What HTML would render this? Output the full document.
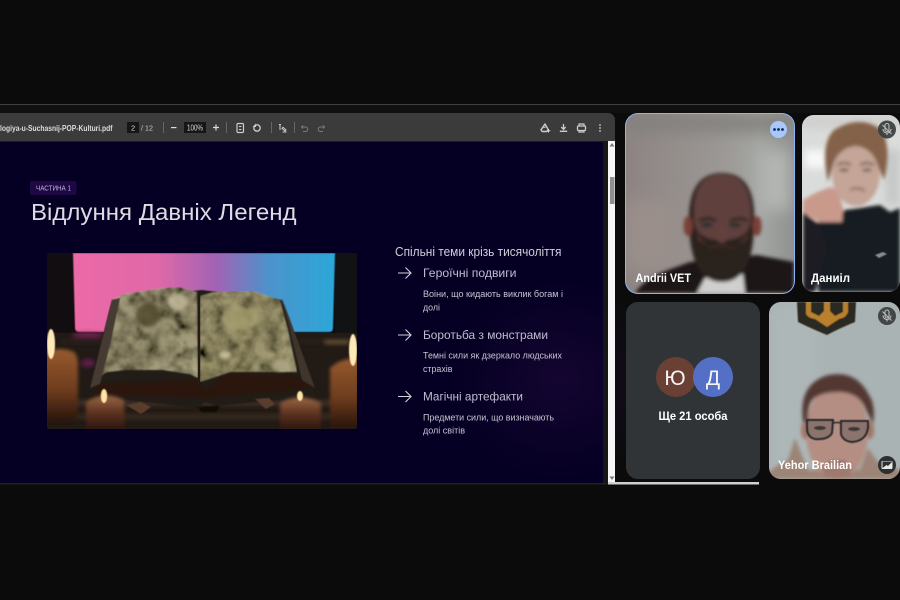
<!DOCTYPE html>
<html><head><meta charset="utf-8"><style>
html,body{margin:0;padding:0;background:#0b0b0b;width:900px;height:600px;overflow:hidden}
svg{display:block}
text{font-family:"Liberation Sans","DejaVu Sans",sans-serif}
</style></head><body>
<svg width="900" height="600" viewBox="0 0 900 600" xmlns="http://www.w3.org/2000/svg">
<defs>
<filter id="b05" x="-10%" y="-10%" width="120%" height="120%"><feGaussianBlur stdDeviation="0.6"/></filter>
<filter id="b1" x="-20%" y="-20%" width="140%" height="140%"><feGaussianBlur stdDeviation="1.800"/></filter>
<filter id="b2" x="-30%" y="-30%" width="160%" height="160%"><feGaussianBlur stdDeviation="2"/></filter>
<filter id="b4" x="-50%" y="-50%" width="200%" height="200%"><feGaussianBlur stdDeviation="4"/></filter>
<filter id="b8" x="-80%" y="-80%" width="260%" height="260%"><feGaussianBlur stdDeviation="8"/></filter>
<filter id="tx" x="-5%" y="-20%" width="110%" height="140%"><feGaussianBlur stdDeviation="0.3"/></filter>
<filter id="tex" x="0" y="0" width="100%" height="100%">
<feTurbulence type="fractalNoise" baseFrequency="0.075" numOctaves="3" seed="7" result="n"/>
<feColorMatrix in="n" type="matrix" values="1.200 1.200 0 0 -0.5  1.200 1.200 0 0 -0.5  1.200 1.200 0 0 -0.55  0 0 0 0 1" result="g"/>
<feBlend in="SourceGraphic" in2="g" mode="multiply" result="m"/>
<feComposite in="m" in2="SourceAlpha" operator="in"/>
<feGaussianBlur stdDeviation="0.7"/>
</filter>
<linearGradient id="scr" x1="0" x2="1" y1="0" y2="0"><stop offset="0" stop-color="#ec6aa6"/><stop offset=".32" stop-color="#e068a8"/><stop offset=".55" stop-color="#a064b4"/><stop offset=".75" stop-color="#4c93cb"/><stop offset="1" stop-color="#2ba7d8"/></linearGradient>
<radialGradient id="glow" cx=".5" cy=".5" r=".5"><stop offset="0" stop-color="#220a3c" stop-opacity=".5"/><stop offset="1" stop-color="#220a3c" stop-opacity="0"/></radialGradient>
<linearGradient id="bg1" x1="0" x2="1" y1="0" y2="0"><stop offset="0" stop-color="#8d8482"/><stop offset=".55" stop-color="#9b9794"/><stop offset=".8" stop-color="#a4a6a3"/><stop offset="1" stop-color="#8f918f"/></linearGradient>
<linearGradient id="pageL" x1="0" x2="1" y1="0" y2="1"><stop offset="0" stop-color="#a89f82"/><stop offset=".5" stop-color="#968e70"/><stop offset="1" stop-color="#b0a888"/></linearGradient>
<linearGradient id="pageR" x1="0" x2="1" y1="0" y2="1"><stop offset="0" stop-color="#aca27e"/><stop offset=".5" stop-color="#968e68"/><stop offset="1" stop-color="#b0a884"/></linearGradient>
<linearGradient id="cand" x1="0" x2="0" y1="0" y2="1"><stop offset="0" stop-color="#96592e"/><stop offset=".55" stop-color="#6e3d1e"/><stop offset="1" stop-color="#26130a"/></linearGradient>
<linearGradient id="cand2" x1="0" x2="0" y1="0" y2="1"><stop offset="0" stop-color="#9a6644"/><stop offset=".5" stop-color="#5c3220"/><stop offset="1" stop-color="#2e170e"/></linearGradient>
<clipPath id="cImg"><rect x="47" y="253" width="310" height="176" rx="2"/></clipPath>
<clipPath id="c1"><rect x="626" y="114" width="168" height="179" rx="12"/></clipPath>
<clipPath id="c2"><rect x="802" y="115" width="98" height="177" rx="12"/></clipPath>
<clipPath id="c4"><rect x="769" y="302" width="131" height="177" rx="12"/></clipPath>
</defs>

<rect width="900" height="600" fill="#0b0b0b"/>
<rect x="0" y="104" width="900" height="1" fill="#3f3f3f"/>
<rect x="0" y="105" width="900" height="8" fill="#101010"/>

<!-- PDF viewer -->
<path d="M0 113H608a7 7 0 0 1 7 7V141H0Z" fill="#3b3b3b"/>
<rect x="0" y="141" width="603" height="1.500" fill="#1c1c1c"/>
<rect x="0" y="142" width="603" height="341" fill="#050023"/>
<ellipse cx="560" cy="380" rx="110" ry="100" fill="url(#glow)"/>
<rect x="603" y="141" width="5" height="342" fill="#161616"/>
<rect x="608" y="141" width="7" height="342" fill="#f6f6f6"/>
<rect x="610" y="177" width="4.500" height="27" fill="#8f8f8f"/>
<path d="M612 143l2.500 3.500h-5z" fill="#777"/>
<path d="M612 480l2.500-3.500h-5z" fill="#777"/>
<rect x="0" y="483" width="615" height="1.500" fill="#222"/>

<!-- toolbar -->
<g filter="url(#tx)">
<text x="0" y="131" font-size="8" font-weight="700" fill="#dcdcdc" textLength="112.500" lengthAdjust="spacingAndGlyphs">logiya-u-Suchasnij-POP-Kulturi.pdf</text>
<rect x="127" y="122" width="12" height="11" fill="#151515"/>
<text x="131" y="130.500" font-size="7.500" fill="#ddd">2</text>
<text x="141" y="130.500" font-size="7.500" fill="#c8c8c8" textLength="12" lengthAdjust="spacingAndGlyphs">/ 12</text>
<rect x="163" y="122" width="1" height="11" fill="#666"/>
<rect x="171" y="127" width="5.500" height="1.200" fill="#ddd"/>
<rect x="184" y="122" width="22" height="11" fill="#151515"/>
<text x="187" y="130.500" font-size="8" fill="#ddd" textLength="16" lengthAdjust="spacingAndGlyphs">100%</text>
<path d="M213 127.500h6M216 124.500v6" stroke="#ddd" stroke-width="1.200"/>
<rect x="226" y="122" width="1" height="11" fill="#666"/>
<rect x="237" y="123.500" width="6.500" height="9" rx="1.200" fill="none" stroke="#ccc" stroke-width="1.200"/>
<path d="M239 126.500h2.500M239 129.500h2.500" stroke="#ccc" stroke-width="1"/>
<circle cx="257" cy="128" r="3.200" fill="none" stroke="#ccc" stroke-width="1.300"/>
<path d="M252.500 127l3.500-3.500v3.500z" fill="#ccc"/>
<rect x="271" y="122" width="1" height="11" fill="#666"/>
<path d="M279 124.500h2M280 124.500v5.500" stroke="#ccc" stroke-width="1"/>
<path d="M282 128.500l3 2.500 1-1-3-2.800zM282.500 132h4" stroke="#ccc" stroke-width="1" fill="none"/>
<rect x="294" y="122" width="1" height="11" fill="#666"/>
<path d="M303 125.500l-1.500 1.500 1.500 1.500M302 127h3.500a2 2 0 0 1 0 4.500H303" stroke="#7a7a7a" stroke-width="1" fill="none"/>
<path d="M323 125.500l1.500 1.500-1.500 1.500M324 127h-3.500a2 2 0 0 0 0 4.500H323" stroke="#7a7a7a" stroke-width="1" fill="none"/>
<path d="M545 124l3.300 5.800-1.500 1.700h-4.600l-1.200-1.700z" fill="none" stroke="#ccc" stroke-width="1.400" stroke-linejoin="round"/>
<path d="M543.500 128l2.500-1.500" stroke="#ccc" stroke-width="1"/>
<path d="M548.500 129v3.500M546.800 130.800h3.500" stroke="#ddd" stroke-width="1"/>
<path d="M563.500 124v5M561.300 127l2.200 2.400 2.200-2.400" stroke="#ccc" stroke-width="1.300" fill="none"/>
<rect x="559.800" y="130.600" width="7.400" height="1.400" fill="#ccc"/>
<rect x="577.500" y="126" width="8" height="4.500" rx="1" fill="none" stroke="#ccc" stroke-width="1.300"/>
<path d="M579 126v-2h5v2M579 130v2h5v-2" stroke="#ccc" stroke-width="1.200" fill="none"/>
<circle cx="600" cy="125" r=".9" fill="#ccc"/><circle cx="600" cy="128" r=".9" fill="#ccc"/><circle cx="600" cy="131" r=".9" fill="#ccc"/>
</g>

<!-- Slide heading -->
<rect x="30" y="181" width="46.500" height="14" rx="2" fill="#1d0845"/>
<g filter="url(#tx)">
<text x="36" y="190.500" font-size="7" fill="#c0b3d4" textLength="35" lengthAdjust="spacingAndGlyphs">ЧАСТИНА 1</text>
<text x="31" y="220" font-size="23" fill="#dddbe4" textLength="265.500" lengthAdjust="spacingAndGlyphs">Відлуння Давніх Легенд</text>
<text x="395" y="256" font-size="12.500" fill="#d0cedb" textLength="166.500" lengthAdjust="spacingAndGlyphs">Спільні теми крізь тисячоліття</text>

<text x="423" y="277" font-size="12" fill="#c0bcce" textLength="93.500" lengthAdjust="spacingAndGlyphs">Героїчні подвиги</text>
<text x="423" y="297" font-size="9" fill="#c6c3d0" textLength="140" lengthAdjust="spacingAndGlyphs">Воіни, що кидають виклик богам і</text>
<text x="423" y="310.500" font-size="9" fill="#c6c3d0" textLength="17" lengthAdjust="spacingAndGlyphs">долі</text>

<text x="423" y="339" font-size="12" fill="#c0bcce" textLength="125" lengthAdjust="spacingAndGlyphs">Боротьба з монстрами</text>
<text x="423" y="358.500" font-size="9" fill="#c6c3d0" textLength="139" lengthAdjust="spacingAndGlyphs">Темні сили як дзеркало людських</text>
<text x="423" y="372" font-size="9" fill="#c6c3d0" textLength="29.500" lengthAdjust="spacingAndGlyphs">страхів</text>

<text x="423" y="400.500" font-size="12" fill="#c0bcce" textLength="100" lengthAdjust="spacingAndGlyphs">Магічні артефакти</text>
<text x="423" y="420.500" font-size="9" fill="#c6c3d0" textLength="131" lengthAdjust="spacingAndGlyphs">Предмети сили, що визначають</text>
<text x="423" y="433.500" font-size="9" fill="#c6c3d0" textLength="42" lengthAdjust="spacingAndGlyphs">долі світів</text>
</g>
<g fill="none" stroke="#d5d2dc" stroke-width="1.100" filter="url(#tx)">
<path d="M398 273h13M405.500 267.500l5.500 5.500-5.500 5.500"/>
<path d="M398 335h13M405.500 329.500l5.500 5.500-5.500 5.500"/>
<path d="M398 396.500h13M405.500 391l5.500 5.500-5.500 5.500"/>
</g>

<!-- Book image -->
<g clip-path="url(#cImg)">
<rect x="47" y="253" width="310" height="176" fill="#0e0a0c"/>
<rect x="335" y="253" width="22" height="85" fill="#101214"/>
<rect x="47" y="253" width="26" height="85" fill="#120d10"/>
<path d="M73 253H335L333 328Q333 332 329 332H80Q75 332 75 328Z" fill="url(#scr)" filter="url(#b05)"/>
<rect x="47" y="333" width="310" height="96" fill="#211a15"/>
<g filter="url(#b2)">
<rect x="60" y="340" width="290" height="3" fill="#2c241d"/>
<rect x="60" y="400" width="290" height="6" fill="#3a2f27"/>
<rect x="60" y="414" width="290" height="5" fill="#342a22"/>
<ellipse cx="88" cy="335" rx="16" ry="2.500" fill="#7d2258"/>
<ellipse cx="88" cy="363" rx="7" ry="4" fill="#5e1f48"/>
<rect x="325" y="340" width="24" height="4" fill="#6a5735"/>
</g>
<!-- book under -->
<path d="M112 300L90 388l6 8 100 12 10-6 10 4 100-10-2-6-32-90-80-10z" fill="#241a15" filter="url(#b05)"/>
<path d="M94 384L198 380 205 392 228 372 296 376 312 388 206 398 96 395z" fill="#2c150c" filter="url(#b05)"/>
<!-- pages -->
<path d="M97 378L108 345 112 300 124 294 163 288 178 287 197 292 198 378 190 374 163 370 125 370 107 372Z" fill="url(#pageL)" filter="url(#tex)"/>
<path d="M200 296L214 292 253 291 280 300 288 330 297 372 270 372 230 372 200 382Z" fill="url(#pageR)" filter="url(#tex)"/>
<path d="M112 300L90 388 100 384 110 345 120 298Z" fill="#453a30" filter="url(#b05)"/>
<path d="M282 298L315 388 302 380 290 330Z" fill="#40362a" filter="url(#b05)"/>
<g filter="url(#b1)" opacity=".75">
<ellipse cx="148" cy="315" rx="12" ry="12" fill="#4c4528"/>
<ellipse cx="240" cy="318" rx="18" ry="12" fill="#a8a070"/>
<ellipse cx="178" cy="302" rx="10" ry="8" fill="#c8c0a0"/>
<ellipse cx="225" cy="355" rx="6" ry="4" fill="#d8d0a8"/>
<ellipse cx="280" cy="365" rx="9" ry="6" fill="#b0a888"/>
</g>
<!-- leaves -->
<g filter="url(#b05)">
<path d="M126 405l15-3 10 5-10 7z" fill="#5a3e2a"/>
<path d="M255 399l14-1 6 6-9 5z" fill="#5a3e2e"/>
<path d="M198 407l22-1-4 6h-14z" fill="#0c0806"/>
</g>
<!-- candles -->
<g filter="url(#b1)">
<path d="M45 352Q60 346 74 352Q78 356 78 365V418Q62 426 45 420Z" fill="url(#cand)"/>
<path d="M86 402Q104 390 124 400L125 429H86Z" fill="url(#cand2)"/>
<path d="M280 403Q300 392 321 403V429H280Z" fill="url(#cand2)"/>
<path d="M330 368Q340 358 359 358V429H330Z" fill="url(#cand)"/>
</g>
<g filter="url(#b05)">
<ellipse cx="51" cy="344" rx="4" ry="15" fill="#ffe9b8"/>
<ellipse cx="104" cy="396" rx="3.200" ry="7" fill="#ffe4a8"/>
<ellipse cx="300" cy="396" rx="3" ry="5" fill="#ffe4a8"/>
<ellipse cx="353" cy="350" rx="4" ry="16" fill="#ffe9b8"/>
</g>
</g>

<!-- Tile 1 -->
<rect x="625" y="113" width="170" height="181" rx="13" fill="#8ab4f8"/>
<g clip-path="url(#c1)">
<rect x="626" y="114" width="168" height="179" fill="url(#bg1)"/>
<g filter="url(#b8)">
<rect x="760" y="150" width="30" height="60" fill="#b4b6b3"/>
<rect x="626" y="114" width="168" height="18" fill="#82807d"/>
<rect x="626" y="200" width="50" height="70" fill="#9a8f8b"/>
</g>
<g filter="url(#b1)">
<path d="M635 293Q645 278 668 270L690 262 757 255 794 262V293Z" fill="#1c1919"/>
<path d="M697 293L705 278 743 274 745 293Z" fill="#cfcfcf"/>
<path d="M689 225Q687 173 722 173Q757 173 754 225Q753 282 722 282Q691 282 689 225Z" fill="#2a201e"/>
<path d="M694 220Q691 175 722 174Q753 175 751 220Q749 240 722 240Q696 240 694 220Z" fill="#5f403c"/>
<path d="M696 225Q700 250 722 246Q745 250 749 225L747 240Q735 248 722 246Q708 248 698 240Z" fill="#53302c"/>
<ellipse cx="688" cy="226" rx="4.500" ry="10" fill="#7a4138"/>
<ellipse cx="757" cy="226" rx="4.500" ry="10" fill="#7a4138"/>
<path d="M699 221Q708 216 716 221M730 221Q739 216 748 221" stroke="#2b1b1b" stroke-width="2.600" fill="none"/>
<ellipse cx="707" cy="225" rx="6" ry="2.500" fill="#2c3030"/>
<ellipse cx="735" cy="225" rx="6" ry="2.500" fill="#2c3030"/>
<ellipse cx="722" cy="234" rx="6" ry="9" fill="#64403c"/>
<path d="M708 249Q722 243 736 249" stroke="#3a2624" stroke-width="3" fill="none"/>
</g>
</g>
<circle cx="778.500" cy="129.500" r="8.500" fill="#a8c7fa"/>
<circle cx="774.500" cy="129.500" r="1.400" fill="#0c2a5e"/><circle cx="778.500" cy="129.500" r="1.400" fill="#0c2a5e"/><circle cx="782.500" cy="129.500" r="1.400" fill="#0c2a5e"/>
<text x="635.500" y="282" font-size="11.500" font-weight="700" fill="#fff" textLength="55.500" lengthAdjust="spacingAndGlyphs" filter="url(#tx)">Andrii VET</text>

<!-- Tile 2 -->
<g clip-path="url(#c2)">
<rect x="802" y="115" width="98" height="177" fill="#dadcdb"/>
<g filter="url(#b4)">
<rect x="805" y="150" width="22" height="18" fill="#f8f8f8"/>
<rect x="885" y="150" width="15" height="55" fill="#c7c9c9"/>
<rect x="802" y="115" width="98" height="14" fill="#d0d0cf"/>
</g>
<g filter="url(#b1)">
<path d="M818 292V222L845 210 880 205 890 212 900 208V292Z" fill="#191b20"/>
<path d="M803 200L803 213 820 222 830 222 842 222 843 208 838 190 830 187 815 193Z" fill="#c99a8c"/>
<path d="M803 212L820 225 827 250 815 292 803 292Z" fill="#1c1e24"/>
<ellipse cx="856" cy="174" rx="24" ry="32" fill="#c4a598"/>
<path d="M828 182Q820 143 834 130Q860 114 882 130Q892 150 884 180L878 166Q872 147 855 146Q840 148 834 162Z" fill="#846249"/>
<path d="M837 165q8-4 14 0M860 165q7-4 14 0" stroke="#6d5448" stroke-width="2" fill="none"/>
<ellipse cx="844" cy="170" rx="5" ry="1.500" fill="#65524a"/>
<ellipse cx="867" cy="170" rx="5" ry="1.500" fill="#65524a"/>
<path d="M850 190q8-4 15 1" stroke="#8d5a52" stroke-width="2" fill="none"/>
</g>
<path d="M875 255l8-3 4 2-8 4z" fill="#8a8c90" filter="url(#b05)"/>
</g>
<circle cx="887" cy="129.500" r="9" fill="#3a3d3e" fill-opacity=".92"/>
<path d="M885 125.500a2 2 0 0 1 4 0v4a2 2 0 0 1-4 0zM883 129a4 4 0 0 0 8 0M887 133v2M882.500 125l9 9" stroke="#b9bcbd" stroke-width="1.100" fill="none"/>
<text x="811" y="282" font-size="11.500" font-weight="700" fill="#fff" textLength="39" lengthAdjust="spacingAndGlyphs" filter="url(#tx)">Даниіл</text>

<!-- Tile 3 -->
<rect x="626" y="302" width="134" height="177" rx="12" fill="#303436"/>
<circle cx="676" cy="377" r="20" fill="#6a4034"/>
<circle cx="713" cy="377" r="20" fill="#5470c6"/>
<text x="675" y="385" text-anchor="middle" font-size="21" fill="#f4f4f4">Ю</text>
<text x="713" y="385" text-anchor="middle" font-size="21" fill="#f4f4f4">Д</text>
<text x="693" y="420" text-anchor="middle" font-size="11.500" font-weight="700" fill="#fff" textLength="69" lengthAdjust="spacingAndGlyphs" filter="url(#tx)">Ще 21 особа</text>
<rect x="608" y="482" width="151" height="2.500" fill="#d0d0d0"/>

<!-- Tile 4 -->
<g clip-path="url(#c4)">
<rect x="769" y="302" width="131" height="177" fill="#a9b3b4"/>
<rect x="769" y="302" width="50" height="177" fill="#b1b9ba" opacity=".6" filter="url(#b8)"/>
<g filter="url(#b05)">
<path d="M797 302H856L855 322Q840 328 827 335Q810 328 798 322Z" fill="#2c2a24"/>
<path d="M806 302V314Q808 318 815 319L827 327 839 319Q846 318 848 312V302H843V312L835 316 830 311V302H824V311L819 316 811 312V302Z" fill="#b9802f"/>
</g>
<g filter="url(#b1)">
<path d="M769 479V472Q778 464 788 460L795 438 808 470H860L868 448 878 462 900 470V479Z" fill="#9c8476"/>
<ellipse cx="837" cy="432" rx="31" ry="48" fill="#b48e82"/>
<ellipse cx="805" cy="430" rx="4" ry="9" fill="#a07465"/>
<ellipse cx="870" cy="430" rx="4" ry="9" fill="#a07465"/>
<path d="M803 422Q798 386 825 376Q855 368 869 395Q876 405 873 424L866 410Q860 393 840 392Q820 392 812 400Q807 407 808 422Z" fill="#533833"/>
<path d="M822 465q15-4 30 0l-2 14h-26z" fill="#9e7a6e"/>
<path d="M828 463q9-2 18 0" stroke="#7d4c48" stroke-width="2" fill="none"/>
</g>
<g filter="url(#b05)">
<path d="M807 420H833L832 433Q828 440 815 439Q807 437 807 428Z" fill="#6a5f5c" fill-opacity=".55" stroke="#26262a" stroke-width="2"/>
<path d="M841 421H868V428Q866 441 852 442Q843 441 841 434Z" fill="#6a5f5c" fill-opacity=".55" stroke="#26262a" stroke-width="2"/>
<path d="M833 423q4-1 8 0" stroke="#2a2a2c" stroke-width="1.600" fill="none"/>
<ellipse cx="820" cy="428" rx="6" ry="2" fill="#3e3634"/>
<ellipse cx="854" cy="429" rx="6" ry="2" fill="#3e3634"/>
</g>
</g>
<circle cx="887" cy="316" r="9" fill="#3a3d3e" fill-opacity=".92"/>
<path d="M885 312a2 2 0 0 1 4 0v4a2 2 0 0 1-4 0zM883 315.500a4 4 0 0 0 8 0M887 319.500v2M882.500 311.500l9 9" stroke="#b9bcbd" stroke-width="1.100" fill="none"/>
<circle cx="887" cy="465" r="9" fill="#2d2f30"/>
<rect x="881.500" y="461" width="11" height="8" rx="1" fill="#e8e8e8"/>
<path d="M882.500 468l4-3 1.500 1 4-4v-.500h-9.500z" fill="#2d2f30"/>
<text x="778" y="469" font-size="11.500" font-weight="700" fill="#fff" textLength="74" lengthAdjust="spacingAndGlyphs" filter="url(#tx)">Yehor Brailian</text>
</svg>
</body></html>
